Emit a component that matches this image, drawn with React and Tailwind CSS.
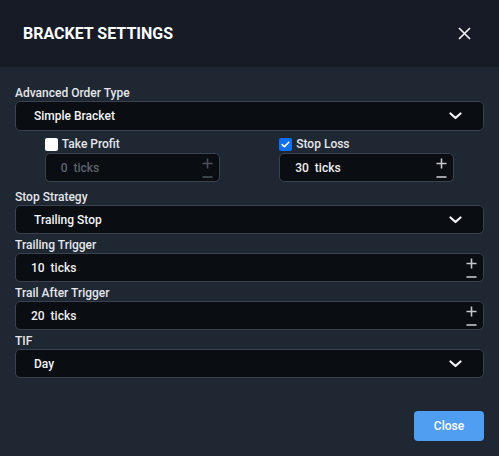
import React, { useState } from 'react';

const Label = ({ children, className = '' }) => (
    <div className={`h-4 leading-4 text-[12px] font-medium text-[#e3e6ea] ${className}`}>{children}</div>
);

const Chevron = () => (
    <svg width="13" height="8" viewBox="0 0 13 8" fill="none">
        <path d="M1.5 1.5 L6.5 6 L11.5 1.5" stroke="#f3f4f6" strokeWidth="2.2" strokeLinecap="round" strokeLinejoin="round" />
    </svg>
);

const Select = ({ value, className = '' }) => (
    <div className={`flex items-center justify-between rounded-[5px] border border-[#3a4251] bg-[#0a0d12] pl-[18px] pr-[21px] ${className}`}>
        <span className="text-[12px] font-medium text-[#f1f3f5]">{value}</span>
        <Chevron />
    </div>
);

// stacked +/- stepper on the right of tick inputs
const Stepper = ({ dim }) => {
    const c = dim ? '#4a505b' : '#c3c7ce';
    return (
        <div className="flex flex-col items-center gap-[7px] pt-px">
            <svg width="11" height="11" viewBox="0 0 11 11">
                <path d="M5.5 0.5 V10.5 M0.5 5.5 H10.5" stroke={c} strokeWidth="1.6" />
            </svg>
            <svg width="11" height="2" viewBox="0 0 11 2">
                <path d="M0.5 1 H10.5" stroke={c} strokeWidth="1.6" />
            </svg>
        </div>
    );
};

const TickInput = ({ value, disabled, className = '' }) => (
    <div className={`flex h-[29px] items-center justify-between rounded-[5px] border border-[#3a4251] bg-[#0a0d12] pl-[15px] pr-[6px] ${className}`}>
        <span className={`text-[12px] font-medium whitespace-pre ${disabled ? 'text-[#5d636d]' : 'text-[#eef0f3]'}`}>
            {value}  ticks
        </span>
        <Stepper dim={disabled} />
    </div>
);

const Checkbox = ({ checked, label }) => (
    <div className="flex h-4 items-center gap-[4px]">
        {checked ? (
            <span className="flex h-[13px] w-[13px] items-center justify-center rounded-[2px] bg-[#1170f0]">
                <svg width="9" height="7" viewBox="0 0 9 7" fill="none">
                    <path d="M1.2 3.6 L3.4 5.6 L7.8 1.2" stroke="white" strokeWidth="1.6" strokeLinecap="round" strokeLinejoin="round" />
                </svg>
            </span>
        ) : (
            <span className="h-[13px] w-[13px] rounded-[2px] bg-white" />
        )}
        <span className="text-[12px] font-medium text-[#e3e6ea]">{label}</span>
    </div>
);

export default function App() {
    const [open] = useState(true);
    if (!open) return null;

    return (
        <div className="flex h-[456px] w-[499px] flex-col bg-[#1f2733] font-['Roboto',sans-serif]">
            {/* Header */}
            <div className="flex h-[67px] items-center justify-between bg-[#161b25] pl-[23px] pr-[28px]">
                <h2 className="text-[16px] font-bold text-white">BRACKET SETTINGS</h2>
                <svg width="13" height="13" viewBox="0 0 13 13">
                    <path d="M1 1 L12 12 M12 1 L1 12" stroke="#f1f3f5" strokeWidth="1.7" />
                </svg>
            </div>

            {/* Body */}
            <div className="flex flex-col px-[15px] pt-[18px]">
                <Label>Advanced Order Type</Label>
                <Select value="Simple Bracket" className="h-[30px]" />

                <div className="mt-[5px] grid grid-cols-2">
                    <div className="mx-auto flex w-[175px] flex-col gap-px">
                        <Checkbox label="Take Profit" />
                        <TickInput value="0" disabled />
                    </div>
                    <div className="mx-auto flex w-[175px] flex-col gap-px">
                        <Checkbox checked label="Stop Loss" />
                        <TickInput value="30" />
                    </div>
                </div>

                <Label className="mt-[7px]">Stop Strategy</Label>
                <Select value="Trailing Stop" className="h-[29px]" />

                <Label className="mt-[3px]">Trailing Trigger</Label>
                <TickInput value="10" />

                <Label className="mt-[3px]">Trail After Trigger</Label>
                <TickInput value="20" />

                <Label className="mt-[3px]">TIF</Label>
                <Select value="Day" className="h-[29px]" />

                <div className="mt-[33px] flex justify-end">
                    <button className="h-[30px] w-[70px] rounded-[4px] bg-[#4f9ef2] text-[12px] font-medium text-white">
                        Close
                    </button>
                </div>
            </div>
        </div>
    );
}
